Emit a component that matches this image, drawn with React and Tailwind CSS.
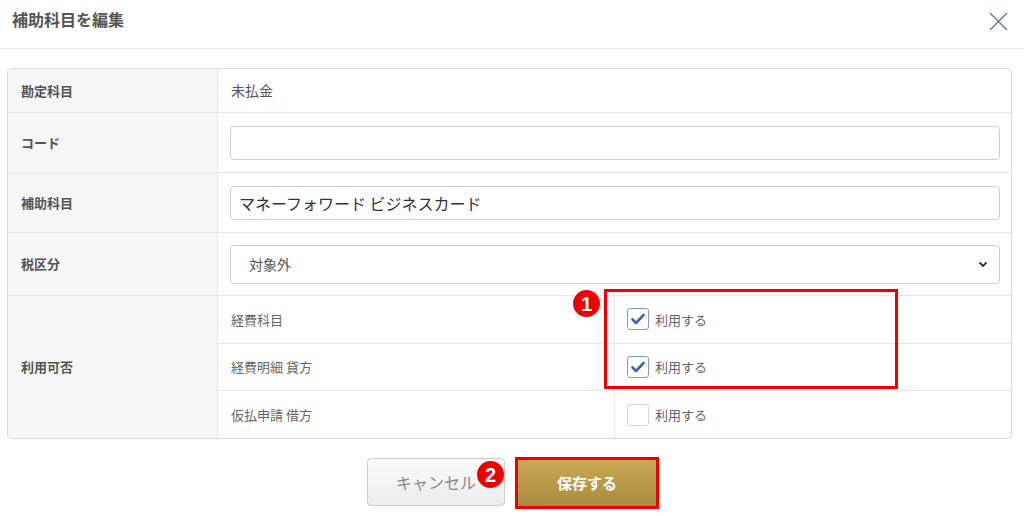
import React from 'react';

const font = { fontFamily: '"Noto Sans CJK JP", "Noto Sans", sans-serif' };

const Label = ({ children, className = '' }) => (
  <div className={`bg-[#f7f7f7] border-r border-[#e6e6e6] flex items-center pl-[13px] text-[13px] font-bold text-[#555] ${className}`}>
    {children}
  </div>
);

const Check = ({ checked }) => (
  <span
    className={`w-[22px] h-[22px] rounded-[3px] border flex items-center justify-center bg-white ${
      checked ? 'border-[#7d9bd0]' : 'border-[#d5d5d5]'
    }`}
  >
    {checked && (
      <svg width="14" height="12" viewBox="0 0 14 12">
        <path d="M1.5 6.5 L5 10 L12.5 2" fill="none" stroke="#3f67a9" strokeWidth="2.6" strokeLinecap="round" strokeLinejoin="round" />
      </svg>
    )}
  </span>
);

const Badge = ({ n, className = '' }) => (
  <span className={`absolute w-[27px] h-[27px] rounded-full bg-[#ee0000] text-white text-[20px] font-black flex items-center justify-center leading-none ${className}`}
    style={{ fontFamily: '"Liberation Sans", Arial, sans-serif' }}>
    {n}
  </span>
);

export default function App() {
  const usage = [
    { name: '経費科目', checked: true },
    { name: '経費明細 貸方', checked: true },
    { name: '仮払申請 借方', checked: false },
  ];

  return (
    <div className="w-[1024px] h-[516px] bg-white overflow-hidden relative" style={font}>
      {/* header */}
      <div className="h-[49px] border-b border-[#e8e8e8] flex items-center justify-between pl-[12px] pr-[16px]">
        <h1 className="text-[16px] font-bold text-[#555] -mt-[10px]">補助科目を編集</h1>
        <svg width="19" height="19" viewBox="0 0 19 19" className="-mt-[5px]">
          <path d="M1 1 L18 18 M18 1 L1 18" stroke="#5a7bb0" strokeWidth="1.4" />
        </svg>
      </div>

      {/* form table */}
      <div className="px-[7px] pt-[19px]">
        <div className="w-[1005px] border border-[#dcdcdc] rounded-[4px] overflow-hidden grid grid-cols-[210px_1fr] text-[#555]">
          <Label className="h-[44px] border-b border-b-[#e6e6e6]">勘定科目</Label>
          <div className="h-[44px] border-b border-[#e6e6e6] flex items-center pl-[13px] text-[14px]">未払金</div>

          <Label className="h-[60px] border-b border-b-[#e6e6e6]">コード</Label>
          <div className="h-[60px] border-b border-[#e6e6e6] flex items-center pl-[12px] pr-[11px]">
            <div className="w-full h-[34px] border border-[#cfcfcf] rounded-[4px]" />
          </div>

          <Label className="h-[60px] border-b border-b-[#e6e6e6]">補助科目</Label>
          <div className="h-[60px] border-b border-[#e6e6e6] flex items-center pl-[12px] pr-[11px]">
            <div className="w-full h-[34px] border border-[#cfcfcf] rounded-[4px] flex items-center pl-[8px] text-[16px] text-[#333]">
              マネーフォワード ビジネスカード
            </div>
          </div>

          <Label className="h-[63px] border-b border-b-[#e6e6e6]">税区分</Label>
          <div className="h-[63px] border-b border-[#e6e6e6] flex items-center pl-[12px] pr-[11px]">
            <div className="w-full h-[39px] border border-[#cfcfcf] rounded-[4px] flex items-center justify-between pl-[18px] pr-[11px] text-[14px] text-[#555]">
              対象外
              <svg width="10" height="7" viewBox="0 0 10 7">
                <path d="M1.5 1.5 L5 5 L8.5 1.5" fill="none" stroke="#333" strokeWidth="1.8" />
              </svg>
            </div>
          </div>

          <Label className="h-[142px]">利用可否</Label>
          <div className="h-[142px] flex flex-col">
            {usage.map((u, i) => (
              <div key={u.name} className={`flex-1 grid grid-cols-[396px_1fr] ${i < 2 ? 'border-b border-[#e6e6e6]' : ''}`}>
                <div className="flex items-center pl-[13px] text-[13px] text-[#666]">{u.name}</div>
                <div className="border-l border-[#e6e6e6] flex items-center gap-[6px] pl-[12px] text-[13px] text-[#666]">
                  <Check checked={u.checked} />
                  利用する
                </div>
              </div>
            ))}
          </div>
        </div>
      </div>

      {/* annotation 1 */}
      <div className="absolute left-[604px] top-[289px] w-[294px] h-[100px] border-[3px] border-[#ee0000]" />
      <Badge n="1" className="left-[573px] top-[290px]" />

      {/* buttons */}
      <div className="flex justify-center gap-[10px] pt-[18px] pl-[2px]">
        <button className="w-[138px] h-[48px] mt-[1px] rounded-[4px] border border-[#cfcfcf] bg-gradient-to-b from-[#fbfbfb] to-[#ececec] text-[16px] text-[#888]">
          キャンセル
        </button>
        <div className="w-[144px] h-[52px] border-[3px] border-[#ee0000] bg-white p-0">
          <button className="w-full h-full bg-gradient-to-b from-[#c9a953] to-[#a98b3e] text-white text-[15px] font-bold">
            保存する
          </button>
        </div>
      </div>
      <Badge n="2" className="left-[477px] top-[461px]" />
    </div>
  );
}
